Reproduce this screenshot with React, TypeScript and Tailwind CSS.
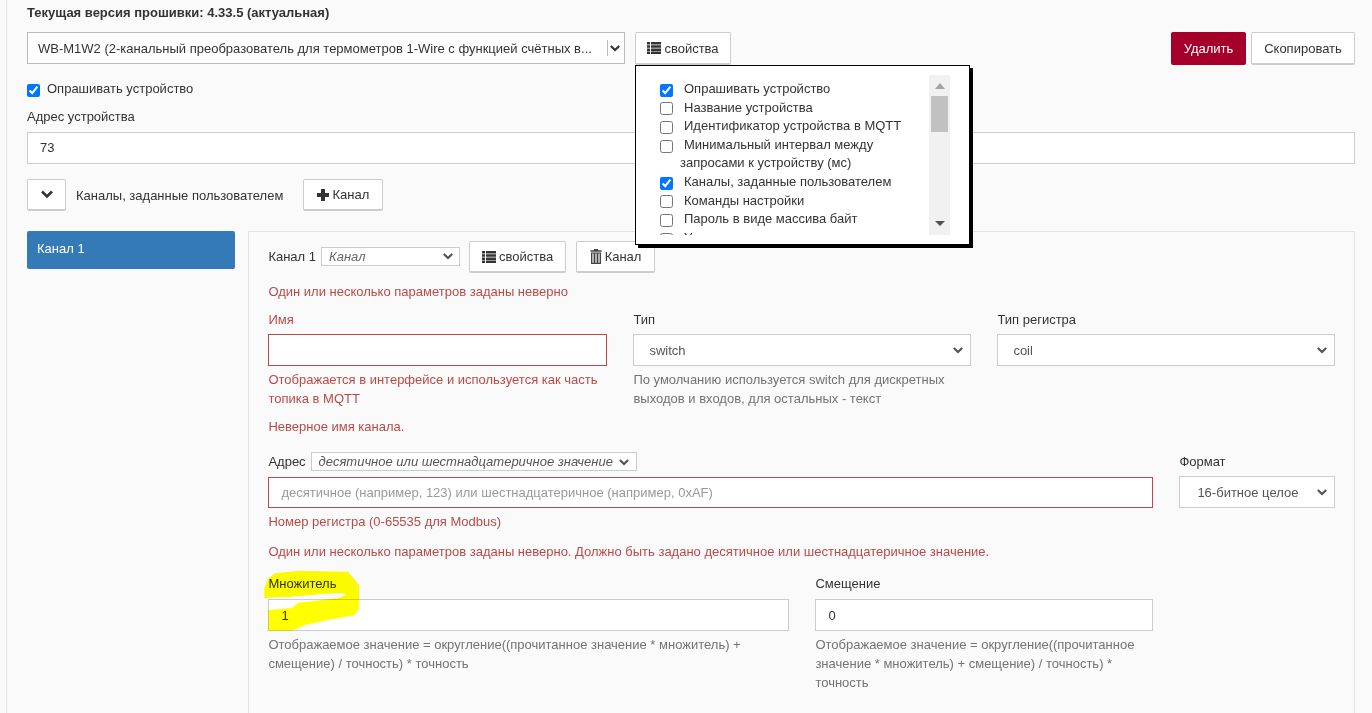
const ERR = "text-[#b94a48]";
const HELP = "text-[#737373]";

function ListIcon() {
  return (
    <svg width="14" height="12" viewBox="0 0 14 12" className="fill-[#333]">
      <path d="M0 0h3v2.5H0zM4 0h10v2.5H4zM0 3.2h3v2.5H0zM4 3.2h10v2.5H4zM0 6.4h3v2.5H0zM4 6.4h10v2.5H4zM0 9.5h3V12H0zM4 9.5h10V12H4z" />
    </svg>
  );
}

function TrashIcon() {
  return (
    <svg width="12" height="15" viewBox="0 0 12 15" className="fill-[#444]">
      <path d="M4 0h4v1.2h3.6v1.5H.4V1.2H4zM1 3.4h10V15H1zM2.4 4.6v9.2h1.2V4.6zM5.4 4.6v9.2h1.2V4.6zM8.4 4.6v9.2h1.2V4.6z" fillRule="evenodd" />
    </svg>
  );
}

function Chevron({ size = 10, color = "#555" }: { size?: number; color?: string }) {
  return (
    <svg width={size} height={size} viewBox="0 0 12 12" fill="none" stroke={color} strokeWidth="2.6" className="shrink-0">
      <path d="M1 3.5 6 8.5l5-5" />
    </svg>
  );
}

function Btn({ children, className = "" }: { children: React.ReactNode; className?: string }) {
  return (
    <button className={`flex items-center justify-center gap-[3px] bg-white border border-[#ccc] border-b-2 rounded-[2px] text-[#333] ${className}`}>
      {children}
    </button>
  );
}

function Check({ checked = false, className = "translate-y-[2px]" }: { checked?: boolean; className?: string }) {
  return <input type="checkbox" readOnly checked={checked} className={`w-[13px] h-[13px] m-0 shrink-0 accent-[#0075ff] ${className}`} />;
}

const popItems = [
  { text: "Опрашивать устройство", checked: true },
  { text: "Название устройства" },
  { text: "Идентификатор устройства в MQTT" },
  { text: "Минимальный интервал между", more: "запросами к устройству (мс)" },
  { text: "Каналы, заданные пользователем", checked: true },
  { text: "Команды настройки" },
  { text: "Пароль в виде массива байт" },
  { text: "Уставки" },
];

function Popover() {
  return (
    <div className="absolute left-0 top-[33px] w-[335px] h-[180px] bg-white border border-black shadow-[3px_3px_0_#000] z-10 pl-[24px] pt-[9px] pr-[19px] flex justify-between">
      <div className="w-[270px] h-[160px] overflow-hidden pt-[5px]">
        {popItems.map((item) => (
          <div key={item.text} className="leading-[18.6px]">
            <div className="flex items-center gap-[11px] h-[18.6px] text-[#333]">
              <Check checked={item.checked} className="translate-y-[1px]" />
              <span>{item.text}</span>
            </div>
            {item.more && <div className="pl-[20px]">{item.more}</div>}
          </div>
        ))}
      </div>
      <div className="w-[21px] h-[160px] bg-[#f1f1f1] flex flex-col items-center justify-between pt-[8px] pb-[9px]">
        <div className="flex flex-col items-center gap-[7px]">
          <div className="w-0 h-0 border-x-[5px] border-x-transparent border-b-[6px] border-b-[#a3a3a3]" />
          <div className="w-[17px] h-[36px] bg-[#c1c1c1]" />
        </div>
        <div className="w-0 h-0 border-x-[5px] border-x-transparent border-t-[5px] border-t-[#505050]" />
      </div>
    </div>
  );
}

export default function App() {
  return (
    <div className="w-[1372px] h-[713px] overflow-hidden bg-[#fafafa] text-[#333] text-[13px] leading-[19px] font-['Liberation_Sans',Arial,sans-serif]">
      <div className="ml-[6px] h-full border-l border-[#e3e3e3] pl-[20px] pr-[17px] pt-[4px]">
        <div className="font-bold leading-[18px]">Текущая версия прошивки: 4.33.5 (актуальная)</div>

        <div className="flex mt-[10px] h-[33px]">
          <div className="w-[598px] h-[32px] bg-white border border-[#bbb] flex items-center pl-[10px] pr-[4px]">
            <span className="flex-1 truncate">WB-M1W2 (2-канальный преобразователь для термометров 1-Wire с функцией счётных в...</span>
            <span className="border-l border-[#bbb] h-[16px] ml-[5px] pl-[2px] flex items-center">
              <Chevron size={10} color="#333" />
            </span>
          </div>
          <div className="relative ml-[10px]">
            <Btn className="w-[96px] h-[33px]">
              <ListIcon />
              <span>свойства</span>
            </Btn>
            <Popover />
          </div>
          <Btn className="ml-auto w-[75px] h-[33px] !bg-[#a6002a] !border-[#a6002a] !text-white">Удалить</Btn>
          <Btn className="ml-[5px] w-[104px] h-[33px]">Скопировать</Btn>
        </div>

        <div className="flex items-center gap-[7px] mt-[14px] h-[19px]">
          <Check checked />
          <span>Опрашивать устройство</span>
        </div>

        <div className="mt-[9px]">Адрес устройства</div>
        <div className="mt-[6px] h-[32px] bg-white border border-[#ccc] flex items-center px-[12px] pb-[2px]">73</div>

        <div className="flex items-center mt-[15px] h-[32px]">
          <Btn className="w-[39px] h-[32px] pb-[2px]">
            <Chevron size={12} color="#333" />
          </Btn>
          <span className="ml-[10px]">Каналы, заданные пользователем</span>
          <Btn className="ml-[20px] w-[80px] h-[32px]">
            <svg width="12" height="12" viewBox="0 0 12 12" className="fill-[#333]">
              <path d="M4 0h4v4h4v4H8v4H4V8H0V4h4z" />
            </svg>
            <span>Канал</span>
          </Btn>
        </div>

        <div className="flex mt-[20px] gap-[13px]">
          <div className="w-[208px] h-[38px] shrink-0 bg-[#337ab7] text-white rounded-[2px] flex items-center px-[10px] pb-[4px]">Канал 1</div>

          <div className="flex-1 h-[600px] border border-[#e3e3e3] pl-[19.4px] pr-[19px] pt-[9px]">
            <div className="flex items-center h-[32px]">
              <span className="mb-[2px]">Канал 1</span>
              <span className="ml-[5px] mb-[2px] w-[139px] h-[19px] bg-white border border-[#ccc] italic text-[#666] flex items-center justify-between pl-[7px] pr-[6px]">
                Канал
                <Chevron />
              </span>
              <Btn className="ml-[9px] w-[97px] h-[32px]">
                <ListIcon />
                <span>свойства</span>
              </Btn>
              <Btn className="ml-[10px] w-[79px] h-[32px] gap-[3px]">
                <TrashIcon />
                <span>Канал</span>
              </Btn>
            </div>

            <div className={`${ERR} mt-[9px]`}>Один или несколько параметров заданы неверно</div>

            <div className="grid grid-cols-[339px_338px_338px] gap-x-[26px] mt-[9px] w-[1067px] items-start">
              <div>
                <div className={ERR}>Имя</div>
                <div className="mt-[5px] h-[32px] bg-white border border-[#b94a48]" />
                <div className={`${ERR} mt-[4px]`}>Отображается в интерфейсе и используется как часть топика в MQTT</div>
              </div>
              <div>
                <div>Тип</div>
                <div className="mt-[5px] h-[32px] bg-white border border-[#ccc] flex items-center justify-between pl-[15px] pr-[7px] text-[#555]">
                  switch
                  <Chevron />
                </div>
                <div className={`${HELP} mt-[4px]`}>По умолчанию используется switch для дискретных выходов и входов, для остальных - текст</div>
              </div>
              <div>
                <div>Тип регистра</div>
                <div className="mt-[5px] h-[32px] bg-white border border-[#ccc] flex items-center justify-between pl-[15px] pr-[7px] text-[#555]">
                  coil
                  <Chevron />
                </div>
              </div>
            </div>

            <div className={`${ERR} mt-[9px]`}>Неверное имя канала.</div>

            <div className="flex gap-[26px] mt-[16px] w-[1067px] items-start">
              <div className="flex-1">
                <div className="flex items-center h-[19px]">
                  <span>Адрес</span>
                  <span className="ml-[5px] w-[326px] h-[19px] bg-white border border-[#ccc] italic text-[#555] flex items-center justify-between pl-[7px] pr-[7px]">
                    десятичное или шестнадцатеричное значение
                    <Chevron />
                  </span>
                </div>
                <div className="mt-[6px] h-[31px] bg-white border border-[#b94a48] flex items-center px-[12px] text-[#999]">
                  десятичное (например, 123) или шестнадцатеричное (например, 0xAF)
                </div>
                <div className={`${ERR} mt-[4px]`}>Номер регистра (0-65535 для Modbus)</div>
              </div>
              <div className="w-[156px]">
                <div className="h-[19px]">Формат</div>
                <div className="mt-[5px] h-[32px] bg-white border border-[#ccc] flex items-center justify-between pl-[17px] pr-[7px] text-[#555]">
                  16-битное целое
                  <Chevron />
                </div>
              </div>
            </div>

            <div className={`${ERR} mt-[11px]`}>Один или несколько параметров заданы неверно. Должно быть задано десятичное или шестнадцатеричное значение.</div>

            <div className="flex gap-[26px] mt-[13px] w-[885px] items-start">
              <div className="w-[521px] relative">
                <div>Множитель</div>
                <div className="mt-[6px] h-[32px] bg-white border border-[#ccc] flex items-center px-[12px]">1</div>
                <div className={`${HELP} mt-[4px]`}>Отображаемое значение = округление((прочитанное значение * множитель) + смещение) / точность) * точность</div>
                <svg width="120" height="75" viewBox="0 0 120 75" className="absolute left-[-13px] top-[-9px] mix-blend-multiply pointer-events-none">
                  <path d="M13.3 13.3 20 8.3 43 6l50 .7L104 20v23l-4 7-27 5-23 5-13 5.7H13.3V45L37 43l6-5 40-5 8-3-4-2-20 1-34 3-13 .3-10.7 1V23z" fill="#ffff00" />
                </svg>
              </div>
              <div className="w-[338px]">
                <div>Смещение</div>
                <div className="mt-[6px] h-[32px] bg-white border border-[#ccc] flex items-center px-[12px]">0</div>
                <div className={`${HELP} mt-[4px]`}>Отображаемое значение = округление((прочитанное значение * множитель) + смещение) / точность) * точность</div>
              </div>
            </div>
          </div>
        </div>
      </div>
    </div>
  );
}
